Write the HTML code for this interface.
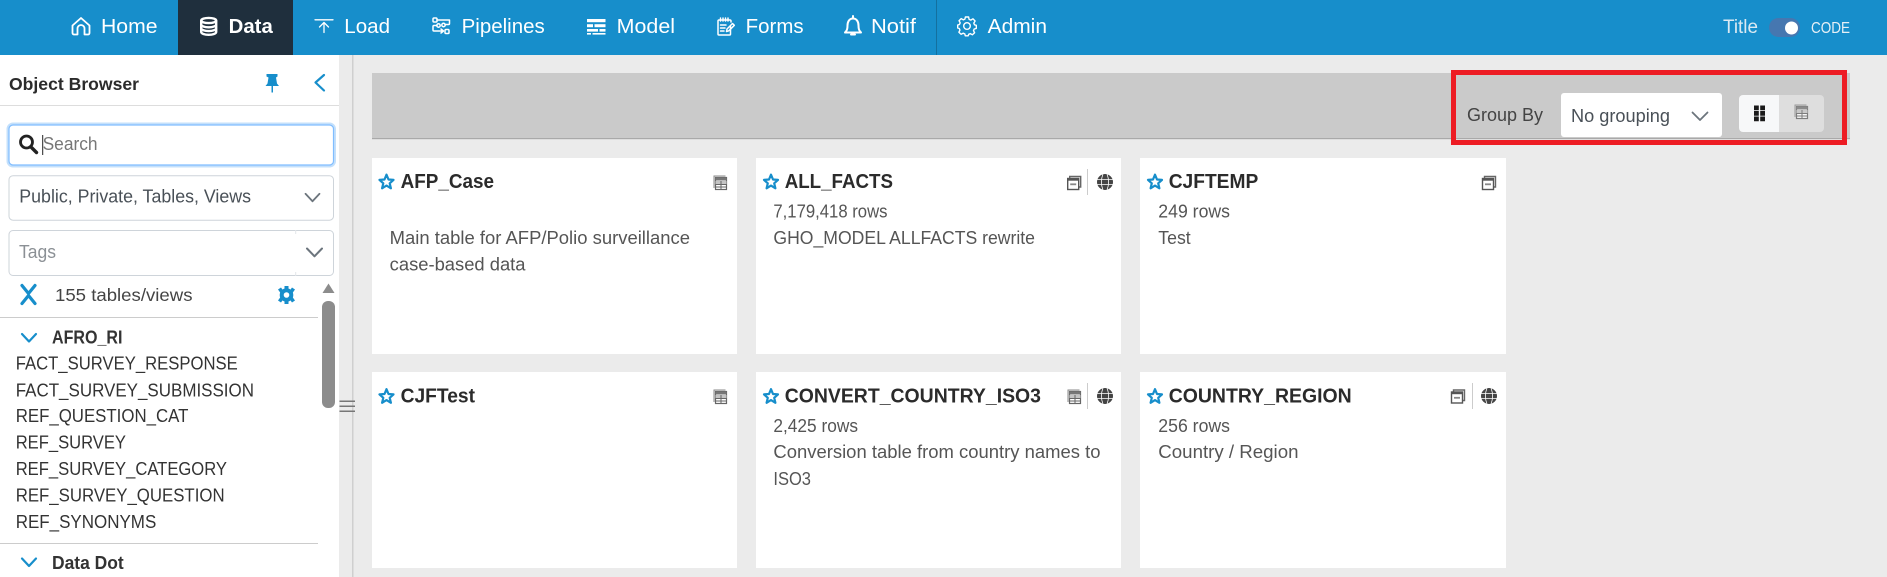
<!DOCTYPE html>
<html lang="en"><head><meta charset="utf-8"><title>Data</title>
<style>
html,body{margin:0;padding:0;width:1887px;height:577px;overflow:hidden;background:#ebebeb}
svg{display:block}
text{font-family:"Liberation Sans",sans-serif;white-space:pre}
.nav{font-size:20px;fill:#fff}
.it{font-size:18px;fill:#333}
.ttl{font-size:20px;font-weight:700;fill:#2b2b2b}
.d{font-size:18px;fill:#555}
.ic{fill:none;stroke:#fff;stroke-linecap:round;stroke-linejoin:round}
.ch{fill:none;stroke-linecap:round;stroke-linejoin:round}
</style></head><body>
<svg width="1887" height="577" viewBox="0 0 1887 577" xmlns="http://www.w3.org/2000/svg">
<defs>
<path id="star" d="M8 1.200 10 6 15 6.400 11.200 9.800 12.400 14.800 8 12.100 3.600 14.800 4.800 9.800 1 6.400 6 6Z" fill="none" stroke="#178ecb" stroke-width="2.200" stroke-linejoin="round"/>
<g id="tbl">
<path d="M1.500 13V1H13" fill="none" stroke="#888" stroke-width="1"/>
<rect x="3" y="2.500" width="11" height="12" fill="#fff" stroke="#666" stroke-width="1.200"/>
<rect x="3" y="2.500" width="11" height="3" fill="#777"/>
<rect x="3" y="6" width="11" height="3" fill="#c4c4c4"/>
<path d="M3 9.500H14M3 12H14M8.500 6V14.500" stroke="#666" stroke-width="1"/>
</g>
<g id="view" fill="none">
<path d="M3 3V1H14V11.500H12" stroke="#666" stroke-width="1.400"/>
<rect x="1" y="3" width="11" height="11" stroke="#555" stroke-width="1.400"/>
<rect x="1" y="3" width="11" height="2.200" fill="#555"/>
<path d="M3.500 8.800H9.500" stroke="#888" stroke-width="1.800"/>
</g>
<g id="globe">
<circle cx="8" cy="8" r="8" fill="#444"/>
<path d="M0 5.500H16M0 10.500H16M6 0C4 5 4 11 6 16M10 0C12 5 12 11 10 16" fill="none" stroke="#fff" stroke-width=".8"/>
</g>
</defs>

<!-- main background -->
<rect width="1887" height="577" fill="#ebebeb"/>

<!-- nav -->
<rect width="1887" height="55" fill="#178ecb"/>
<rect x="178" width="115" height="55" fill="#1f2f3d"/>
<rect x="936" y="0" width="1" height="55" fill="#14709f"/>

<path class="ic" stroke-width="1.800" transform="translate(71.500 17)" d="M1 8.500 9.500 1 18 8.500V16a1.500 1.500 0 0 1-1.500 1.500H13V11.500a3.500 3.500 0 0 0-7 0V17.500H2.500A1.500 1.500 0 0 1 1 16Z"/>
<text class="nav" x="101" y="33" textLength="56.500" lengthAdjust="spacingAndGlyphs">Home</text>

<g transform="translate(200 17)" fill="none" stroke="#fff" stroke-width="2.400">
<ellipse cx="8.700" cy="3.500" rx="7.500" ry="2.600"/>
<path d="M1.200 3.500V15c0 1.500 3.400 2.800 7.500 2.800s7.500-1.300 7.500-2.800V3.500M1.200 7.500c0 1.500 3.400 2.800 7.500 2.800s7.500-1.300 7.500-2.800M1.200 11.300c0 1.500 3.400 2.800 7.500 2.800s7.500-1.300 7.500-2.800"/>
</g>
<text class="nav" x="228.600" y="33" textLength="44.200" lengthAdjust="spacingAndGlyphs" font-weight="700">Data</text>

<path class="ic" stroke-width="1.300" d="M315 19.800H333M324 32.500V22.500M319.500 27 324 22.500 328.500 27"/>
<text class="nav" x="344.300" y="33" textLength="45.700" lengthAdjust="spacingAndGlyphs">Load</text>

<g class="ic" transform="translate(432 17)" stroke-width="1.500">
<rect x="1" y="1" width="4" height="4" rx="1"/><path d="M5 3H17.500V6.500a1 1 0 0 1-1 1H13"/>
<circle cx="6.500" cy="8.500" r="1.700"/><circle cx="11.500" cy="8" r="1.700"/>
<path d="M5 8.500H2a1 1 0 0 0-1 1V13a1 1 0 0 0 1 1H11M9 12 11.500 14 9 16"/>
<rect x="13" y="12.500" width="4" height="4" rx="1"/>
</g>
<text class="nav" x="461.600" y="33" textLength="83.200" lengthAdjust="spacingAndGlyphs">Pipelines</text>

<g transform="translate(587 19)" fill="#fff">
<rect width="18.500" height="3.200"/><rect y="5.200" width="6" height="3"/><rect x="7.500" y="5.200" width="11" height="3"/>
<rect y="10" width="11" height="2.600"/><rect x="12.500" y="10" width="6" height="2.600"/>
<rect y="14" width="4" height="1.600"/><rect x="5.500" y="14" width="13" height="1.600"/>
</g>
<text class="nav" x="616.700" y="33" textLength="58.300" lengthAdjust="spacingAndGlyphs">Model</text>

<g class="ic" transform="translate(717 17)" stroke-width="1.500">
<path d="M13.500 9.500V17a1 1 0 0 1-1 1H2a1 1 0 0 1-1-1V4a1 1 0 0 1 1-1H13a1 1 0 0 1 1 1V5"/>
<path d="M3.500 1V4M6 1V4M8.500 1V4M11 1V4M3.500 8H9M3.500 11H8M3.500 14H7"/>
<path d="M9.500 14.500 10 12 15.500 6.500 17.300 8.300 11.800 13.800Z"/>
</g>
<text class="nav" x="745.700" y="33" textLength="57.900" lengthAdjust="spacingAndGlyphs">Forms</text>

<g class="ic" transform="translate(844 15)" stroke-width="2">
<path d="M1 17.500H17C15 15.500 14.500 14 14.500 10.500 14.500 6.500 12.500 3.500 9 3.500S3.500 6.500 3.500 10.500C3.500 14 3 15.500 1 17.500Z"/>
<path d="M9 1V3.500M7 19.500H11"/>
</g>
<text class="nav" x="871" y="33" textLength="45" lengthAdjust="spacingAndGlyphs">Notif</text>

<g class="ic" transform="translate(967 26)" stroke-width="1.400">
<circle r="3.300"/>
<path d="M-1.600-9H1.600L2.100-6.600 3.800-5.900 5.900-7.200 8.100-5 6.800-2.900 7.500-1.200 9.300-.7V2.400L7.200 3 6.500 4.700 7.600 6.700 5.400 8.800 3.300 7.600 1.700 8.300 1.200 9.800H-1.700L-2.200 7.900-3.900 7.200-5.900 8.300-8.100 6.200-7 4.100-7.700 2.500-9.300 2V-1L-7.500-1.600-6.800-3.200-8-5.300-5.800-7.400-3.700-6.200-2.100-6.900Z"/>
</g>
<text class="nav" x="987.600" y="33" textLength="59.400" lengthAdjust="spacingAndGlyphs">Admin</text>

<text x="1723" y="33" font-size="19" fill="#dceaf3" textLength="35" lengthAdjust="spacingAndGlyphs">Title</text>
<rect x="1769" y="18" width="31" height="19" rx="9.500" fill="#4677b0"/>
<circle cx="1791.500" cy="28" r="6.500" fill="#fff"/>
<text x="1811" y="33" font-size="16" fill="#e6f0f6" textLength="39" lengthAdjust="spacingAndGlyphs">CODE</text>

<!-- sidebar -->
<rect x="0" y="55" width="339" height="522" fill="#fff"/>
<rect x="352" y="55" width="1.500" height="522" fill="#cfcfcf"/>
<rect x="0" y="105" width="339" height="1" fill="#ddd"/>
<text x="9" y="90" font-size="17.500" font-weight="700" fill="#2b2b2b" textLength="130" lengthAdjust="spacingAndGlyphs">Object Browser</text>
<path d="M266.500 74H277.500V76.500L276 77.500 277 83.500 279 86H273V92.500H271.500V86H265.500L267.500 83.500 268.500 77.500 266.500 76.500Z" fill="#178ecb"/>
<path class="ch" stroke="#178ecb" stroke-width="2.200" d="M324 75 315.500 82.500 324 90.500"/>

<rect x="9" y="125" width="324.500" height="40" rx="4" fill="#fff" stroke="#c4e0fb" stroke-width="5"/>
<rect x="9" y="125" width="324.500" height="40" rx="4" fill="#fff" stroke="#80bdff" stroke-width="1.200"/>
<circle cx="26.500" cy="142" r="6" fill="none" stroke="#222" stroke-width="2.800"/>
<path d="M31 147 36.500 152.500" stroke="#222" stroke-width="3.400" stroke-linecap="round"/>
<text x="42.600" y="150" font-size="18.500" fill="#777" textLength="55" lengthAdjust="spacingAndGlyphs">Search</text>
<rect x="42.200" y="135" width="1" height="20" fill="#222"/>

<rect x="9" y="175.700" width="324.500" height="44.500" rx="4" fill="#fff" stroke="#ced4da"/>
<text x="19.300" y="202.500" font-size="18" fill="#495057" textLength="231.700" lengthAdjust="spacingAndGlyphs">Public, Private, Tables, Views</text>
<path class="ch" stroke="#6c757d" stroke-width="1.800" d="M305.500 193.800 312.500 201.300 319.500 193.800"/>

<rect x="9" y="230.500" width="324.500" height="45" rx="4" fill="#fff" stroke="#ced4da"/>
<text x="19" y="258" font-size="18" fill="#8b9095" textLength="37" lengthAdjust="spacingAndGlyphs">Tags</text>
<path d="M295.700 230V234M295.700 272V276" stroke="#e3e6e9" stroke-width="1"/>
<path class="ch" stroke="#6c757d" stroke-width="2" d="M307 248.500 314.500 256.300 322 248.500"/>

<path class="ch" stroke="#178ecb" stroke-width="3.200" stroke-linecap="butt" d="M22 285.500 28.500 293.500 35 285.500M22 303.500 28.500 295.500 35 303.500"/>
<text x="55" y="300.800" font-size="17.500" fill="#444" textLength="137.500" lengthAdjust="spacingAndGlyphs">155 tables/views</text>
<g transform="translate(286.500 295)">
<circle r="4.800" fill="none" stroke="#178ecb" stroke-width="4"/>
<path d="M-2-9H2V-5H-2ZM-2 5H2V9H-2ZM-8.500-5.500-5.500-7.500-3-4-6-2ZM8.500-5.500 5.500-7.500 3-4 6-2ZM-8.500 5.500-5.500 7.500-3 4-6 2ZM8.500 5.500 5.500 7.500 3 4 6 2Z" fill="#178ecb"/>
</g>

<path d="M322.500 293 328.500 283.500 334.500 293Z" fill="#8c8c8c"/>
<rect x="322" y="301" width="13" height="107" rx="6" fill="#8c8c8c"/>

<rect x="0" y="317" width="318" height="1" fill="#ccc"/>
<path class="ch" stroke="#178ecb" stroke-width="2.200" d="M22 334 29 341.500 36 334"/>
<text x="52" y="343.500" font-size="18" font-weight="700" fill="#333" textLength="70.500" lengthAdjust="spacingAndGlyphs">AFRO_RI</text>
<text class="it" x="15.700" y="369.300" textLength="222.100" lengthAdjust="spacingAndGlyphs">FACT_SURVEY_RESPONSE</text>
<text class="it" x="15.700" y="396.300" textLength="238.300" lengthAdjust="spacingAndGlyphs">FACT_SURVEY_SUBMISSION</text>
<text class="it" x="15.700" y="422" textLength="172.700" lengthAdjust="spacingAndGlyphs">REF_QUESTION_CAT</text>
<text class="it" x="15.700" y="448.500" textLength="110.300" lengthAdjust="spacingAndGlyphs">REF_SURVEY</text>
<text class="it" x="15.700" y="475" textLength="211.300" lengthAdjust="spacingAndGlyphs">REF_SURVEY_CATEGORY</text>
<text class="it" x="15.700" y="501.300" textLength="208.900" lengthAdjust="spacingAndGlyphs">REF_SURVEY_QUESTION</text>
<text class="it" x="15.700" y="528" textLength="140.600" lengthAdjust="spacingAndGlyphs">REF_SYNONYMS</text>
<rect x="0" y="543" width="318" height="1" fill="#ccc"/>
<path class="ch" stroke="#178ecb" stroke-width="2.200" d="M22 558.500 29 566 36 558.500"/>
<text x="52" y="569" font-size="18" font-weight="700" fill="#333" textLength="71.700" lengthAdjust="spacingAndGlyphs">Data Dot</text>

<!-- splitter grip -->
<path d="M339.500 401.300H355M339.500 406.200H355M339.500 411.200H355" stroke="#777" stroke-width="1.500"/>

<!-- toolbar -->
<rect x="372" y="73" width="1478" height="65" fill="#cacaca"/>
<rect x="372" y="138" width="1478" height="1.200" fill="#a9a9a9"/>
<rect x="1453.500" y="72.500" width="391" height="70" fill="none" stroke="#ed1c24" stroke-width="5"/>
<text x="1467" y="121" font-size="18" fill="#444" textLength="76" lengthAdjust="spacingAndGlyphs">Group By</text>
<rect x="1561" y="93" width="161" height="44" rx="3" fill="#fff"/>
<text x="1571" y="122" font-size="18" fill="#495057" textLength="99" lengthAdjust="spacingAndGlyphs">No grouping</text>
<path class="ch" stroke="#6c757d" stroke-width="1.800" d="M1692.500 112.500 1700 120 1707.500 112.500"/>
<path d="M1739 99a4 4 0 0 1 4-4H1779V132H1743a4 4 0 0 1-4-4Z" fill="#f7f8f9"/>
<path d="M1779 95H1820a4 4 0 0 1 4 4V128a4 4 0 0 1-4 4H1779Z" fill="#dedede"/>
<path d="M1754 105.500H1758.800V110.300H1754ZM1760.200 105.500H1765V110.300H1760.200ZM1754 111H1758.800V115.800H1754ZM1760.200 111H1765V115.800H1760.200ZM1754 116.500H1758.800V121.300H1754ZM1760.200 116.500H1765V121.300H1760.200Z" fill="#1a1a1a"/>
<g transform="translate(1793.500 104)" opacity=".8"><use href="#tbl"/></g>

<!-- row 1 cards -->
<rect x="372" y="158" width="365" height="196" fill="#fff"/>
<rect x="756" y="158" width="365" height="196" fill="#fff"/>
<rect x="1140" y="158" width="366" height="196" fill="#fff"/>
<!-- row 2 cards -->
<rect x="372" y="372" width="365" height="196" fill="#fff"/>
<rect x="756" y="372" width="365" height="196" fill="#fff"/>
<rect x="1140" y="372" width="366" height="196" fill="#fff"/>

<!-- AFP_Case -->
<use href="#star" x="378.500" y="173.500"/>
<text class="ttl" x="400.600" y="188" textLength="93.400" lengthAdjust="spacingAndGlyphs">AFP_Case</text>
<use href="#tbl" x="712.500" y="175"/>
<text class="d" x="389.700" y="244" textLength="300.300" lengthAdjust="spacingAndGlyphs">Main table for AFP/Polio surveillance</text>
<text class="d" x="389.700" y="270.700" textLength="135.800" lengthAdjust="spacingAndGlyphs">case-based data</text>

<!-- ALL_FACTS -->
<use href="#star" x="763" y="173.500"/>
<text class="ttl" x="784.700" y="188" textLength="108.300" lengthAdjust="spacingAndGlyphs">ALL_FACTS</text>
<use href="#view" x="1066.700" y="175.500"/>
<rect x="1087" y="169" width="1" height="26" fill="#ccc"/>
<use href="#globe" x="1097" y="174"/>
<text class="d" x="773.400" y="217.500" textLength="114.100" lengthAdjust="spacingAndGlyphs">7,179,418 rows</text>
<text class="d" x="773.400" y="244" textLength="261.600" lengthAdjust="spacingAndGlyphs">GHO_MODEL ALLFACTS rewrite</text>

<!-- CJFTEMP -->
<use href="#star" x="1147" y="173.500"/>
<text class="ttl" x="1168.700" y="188" textLength="89.600" lengthAdjust="spacingAndGlyphs">CJFTEMP</text>
<use href="#view" x="1481.500" y="175.500"/>
<text class="d" x="1158.300" y="217.500" textLength="71.700" lengthAdjust="spacingAndGlyphs">249 rows</text>
<text class="d" x="1158.300" y="244" textLength="32.400" lengthAdjust="spacingAndGlyphs">Test</text>

<!-- CJFTest -->
<use href="#star" x="378.500" y="388"/>
<text class="ttl" x="400.600" y="402.700" textLength="74.400" lengthAdjust="spacingAndGlyphs">CJFTest</text>
<use href="#tbl" x="712.500" y="389"/>

<!-- CONVERT_COUNTRY_ISO3 -->
<use href="#star" x="763" y="388"/>
<text class="ttl" x="784.700" y="402.700" textLength="256.300" lengthAdjust="spacingAndGlyphs">CONVERT_COUNTRY_ISO3</text>
<use href="#tbl" x="1066.500" y="389"/>
<rect x="1087" y="383" width="1" height="26" fill="#ccc"/>
<use href="#globe" x="1097" y="388"/>
<text class="d" x="773.400" y="432" textLength="84.600" lengthAdjust="spacingAndGlyphs">2,425 rows</text>
<text class="d" x="773.400" y="458" textLength="327.100" lengthAdjust="spacingAndGlyphs">Conversion table from country names to</text>
<text class="d" x="773.400" y="485" textLength="37.600" lengthAdjust="spacingAndGlyphs" font-size="19">ISO3</text>

<!-- COUNTRY_REGION -->
<use href="#star" x="1147" y="388"/>
<text class="ttl" x="1168.700" y="402.700" textLength="183" lengthAdjust="spacingAndGlyphs">COUNTRY_REGION</text>
<use href="#view" x="1450.500" y="389"/>
<rect x="1472" y="383" width="1" height="26" fill="#ccc"/>
<use href="#globe" x="1481" y="388"/>
<text class="d" x="1158.300" y="432" textLength="71.700" lengthAdjust="spacingAndGlyphs">256 rows</text>
<text class="d" x="1158.300" y="458" textLength="140.200" lengthAdjust="spacingAndGlyphs">Country / Region</text>
</svg>
</body></html>
